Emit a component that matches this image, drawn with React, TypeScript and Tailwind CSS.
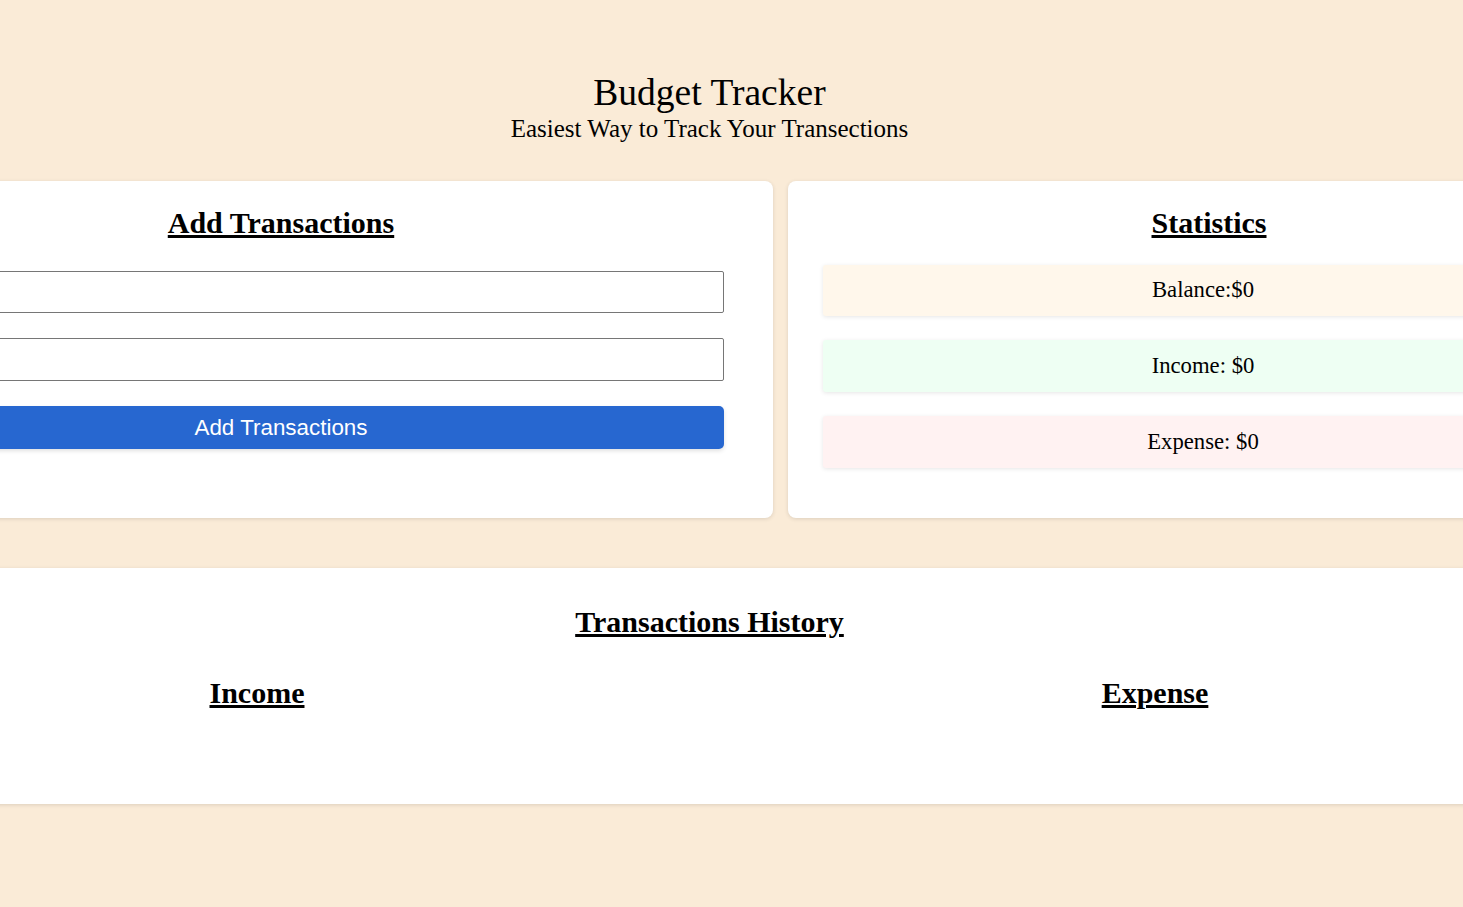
const stats = [
  { label: "Balance:$0", bg: "bg-[#fff7eb]" },
  { label: "Income: $0", bg: "bg-[#eefff3]" },
  { label: "Expense: $0", bg: "bg-[#fff2f2]" },
];

const App = () => {
  return (
    <div className="min-h-[907px] w-full overflow-hidden bg-[#faebd7] font-['Liberation_Serif',serif] text-black">
      {/* the page is wider than the window, so it spills over both sides */}
      <div className="ml-[-211px] w-[1841px]">
        <header className="pt-[72px] text-center">
          <h1 className="text-[37.5px] leading-[41px]">Budget Tracker</h1>
          <p className="mt-[2px] text-[25px] leading-[28px]">
            Easiest Way to Track Your Transections
          </p>
        </header>

        <div className="mt-[38px] flex gap-[15px]">
          <section className="w-[984px] rounded-lg bg-white px-[49px] pt-[25px] pb-[69px] shadow-[0_1px_4px_rgba(0,0,0,0.12)]">
            <h2 className="text-center text-[30px] font-bold leading-[33px] underline">
              Add Transactions
            </h2>
            <div className="mt-[32px] flex flex-col gap-[25px]">
              <input
                type="text"
                className="h-[42px] w-full rounded-[2px] border border-[#767676] bg-white px-2 outline-none"
              />
              <input
                type="number"
                className="h-[43px] w-full rounded-[2px] border border-[#767676] bg-white px-2 outline-none"
              />
              <button className="h-[43px] w-full rounded-[5px] bg-[#2767d0] font-['Liberation_Sans',Arial,sans-serif] text-[22.4px] text-white shadow-[0_2px_4px_rgba(0,0,0,0.12)]">
                Add Transactions
              </button>
            </div>
          </section>

          <section className="w-[842px] rounded-lg bg-white pt-[25px] pb-[50px] shadow-[0_1px_4px_rgba(0,0,0,0.12)]">
            <h2 className="text-center text-[30px] font-bold leading-[33px] underline">
              Statistics
            </h2>
            <div className="mt-[26px] flex flex-col gap-[24px] pl-[35px] pr-[47px]">
              {stats.map((s, i) => (
                <div
                  key={s.label}
                  className={`flex ${i === 0 ? "h-[51px]" : "h-[52px]"} items-center justify-center rounded-[3px] ${s.bg} text-[22.7px] shadow-[0_1px_4px_rgba(0,0,0,0.1)]`}
                >
                  {s.label}
                </div>
              ))}
            </div>
          </section>
        </div>

        {/* history */}
        <section className="mt-[50px] bg-white pt-[37px] pb-[95px] shadow-[0_1px_4px_rgba(0,0,0,0.12)]">
          <h2 className="text-center text-[30px] font-bold leading-[33px] underline">
            Transactions History
          </h2>
          <div className="mt-[38px] grid grid-cols-2 pl-[19px] pr-[26px]">
            <h3 className="text-center text-[30px] font-bold leading-[33px] underline">Income</h3>
            <h3 className="text-center text-[30px] font-bold leading-[33px] underline">Expense</h3>
          </div>
        </section>
      </div>
    </div>
  );
};

export default App;
